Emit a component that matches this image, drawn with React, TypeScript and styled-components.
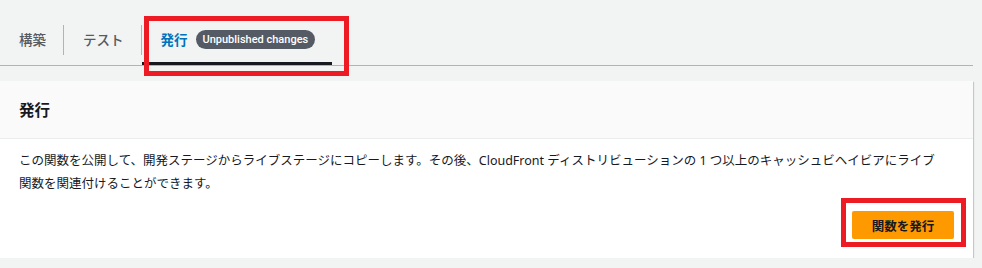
import styled, { createGlobalStyle } from 'styled-components'

const GlobalStyle = createGlobalStyle`
  html, body {
    margin: 0;
    padding: 0;
    background: #f2f3f3;
  }
  body {
    font-family: "Noto Sans", "Noto Sans CJK JP", sans-serif;
    color: #16191f;
  }
`

const Page = styled.div`
  padding: 16px 9px 0 0;
`

const TabList = styled.div`
  display: flex;
  align-items: center;
  border-bottom: 1px solid #aab7b8;
`

const Tab = styled.div<{ active?: boolean }>`
  position: relative;
  display: flex;
  align-items: center;
  gap: 8px;
  height: 49px;
  box-sizing: border-box;
  padding: 0 17px 0 19px;
  border-bottom: 3px solid ${(p) => (p.active ? '#16191f' : 'transparent')};
  font-size: 13.5px;
  font-weight: ${(p) => (p.active ? 700 : 500)};
  color: ${(p) => (p.active ? '#0073bb' : '#545b64')};
  white-space: nowrap;
`

const TabDivider = styled.span`
  width: 1px;
  height: 30px;
  margin-bottom: 2px;
  background: #aab7b8;
`

const Badge = styled.span`
  display: inline-flex;
  align-items: center;
  height: 19px;
  padding: 0 7px;
  border-radius: 10px;
  background: #545b64;
  color: #ffffff;
  font-family: Roboto, "Noto Sans", sans-serif;
  font-size: 11px;
  font-weight: 500;
`

const Highlight = styled.span<{ left: number; top: number; w: number; h: number }>`
  position: absolute;
  left: ${(p) => p.left}px;
  top: ${(p) => p.top}px;
  width: ${(p) => p.w}px;
  height: ${(p) => p.h}px;
  box-sizing: border-box;
  border: 5px solid #ed1c24;
  pointer-events: none;
`

const Card = styled.section`
  margin-top: 15px;
  background: #ffffff;
  box-shadow: 0 1px 1px 0 rgba(0, 28, 36, 0.3), 1px 1px 1px 0 rgba(0, 28, 36, 0.15),
    -1px 1px 1px 0 rgba(0, 28, 36, 0.15);
`

const CardHeader = styled.header`
  display: flex;
  align-items: center;
  height: 58px;
  box-sizing: border-box;
  padding: 0 19px;
  background: #fafafa;
  border-bottom: 1px solid #eaeded;
`

const Heading = styled.h2`
  margin: 0;
  font-size: 15.5px;
  font-weight: 700;
  color: #16191f;
`

const CardBody = styled.div`
  padding: 10px 19px 19px 19px;
`

const Description = styled.p`
  margin: 0;
  font-size: 12.5px;
  line-height: 23px;
  color: #16191f;
`

const Actions = styled.div`
  display: flex;
  justify-content: flex-end;
  margin-top: 16px;
`

const PrimaryButton = styled.button`
  position: relative;
  width: 102px;
  height: 28px;
  border: none;
  border-radius: 2px;
  background: #ff9900;
  color: #16191f;
  font-family: inherit;
  font-size: 12.5px;
  font-weight: 700;
  cursor: pointer;
`

const App = () => (
  <>
    <GlobalStyle />
    <Page>
      <TabList>
        <Tab>構築</Tab>
        <TabDivider />
        <Tab>テスト</Tab>
        <TabDivider />
        <Tab active>
          発行
          <Badge>Unpublished changes</Badge>
          <Highlight left={2} top={0} w={205} h={60} />
        </Tab>
      </TabList>
      <Card>
        <CardHeader>
          <Heading>発行</Heading>
        </CardHeader>
        <CardBody>
          <Description>
            この関数を公開して、開発ステージからライブステージにコピーします。その後、CloudFront
            ディストリビューションの 1 つ以上のキャッシュビヘイビアにライブ
            <br />
            関数を関連付けることができます。
          </Description>
          <Actions>
            <PrimaryButton>
              関数を発行
              <Highlight left={-11} top={-13} w={125} h={49} />
            </PrimaryButton>
          </Actions>
        </CardBody>
      </Card>
    </Page>
  </>
)

export default App
